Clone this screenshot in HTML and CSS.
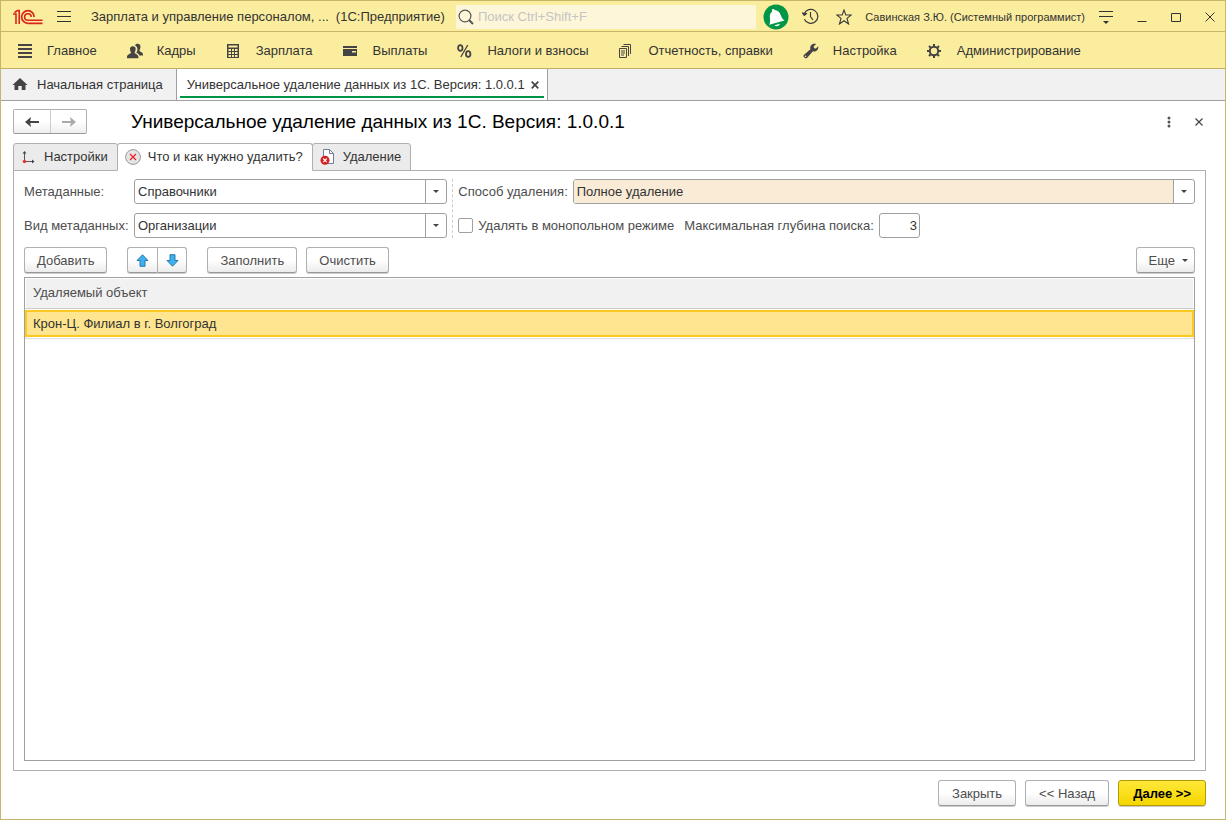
FILE: index.html
```html
<!DOCTYPE html>
<html lang="ru">
<head>
    <meta charset="UTF-8">
    <meta name="viewport" content="width=device-width, initial-scale=1.0">
    <title>Универсальное удаление данных из 1С</title>
    <link rel="stylesheet" href="styles.css">
</head>
<body>

<div class="window">
    <header class="titlebar">
        <svg class="logo" width="30" height="16" viewBox="0 0 30 16" fill="none" stroke="#d9251d">
            <path d="M0 5H3V15M1.5 3.5L4.5 1.6H6.2V15" stroke-width="1.6"/>
            <path d="M21.2 8A6.3 6.3 0 1 0 14.9 14.3H29.5" stroke-width="1.7"/>
            <path d="M18.2 8A3.3 3.3 0 1 0 14.9 11.3H29.5" stroke-width="1.6"/>
        </svg>
        <button class="icon-btn menu-btn" aria-label="Меню">
            <svg width="14" height="12" viewBox="0 0 14 12" stroke="#333"><path d="M0 .5H14M0 5.5H14M0 10.5H14"/></svg>
        </button>
        <span class="app-name">Зарплата и управление персоналом, ...</span>
        <span class="app-platform">(1С:Предприятие)</span>
        <label class="search">
            <svg width="16" height="16" viewBox="0 0 16 16" fill="none" stroke="#555"><circle cx="7" cy="7" r="5.9" stroke-width="1.2"/><path d="M11 11L15 15" stroke-width="2"/></svg>
            <input type="text" placeholder="Поиск Ctrl+Shift+F" aria-label="Поиск">
        </label>
        <div class="title-tools">
            <button class="icon-btn" aria-label="Уведомления">
                <svg width="26" height="26" viewBox="0 0 26 26">
                    <circle cx="13" cy="13" r="12.5" fill="#009646"/>
                    <path d="M9 5.6C10 4.6 11.2 5 11.6 6C14.6 6.2 16.6 8 17.8 11.2C18.8 14 19.6 15.2 21.6 16.4L6.2 20.8C7.2 19 7.2 17.6 7 15C6.6 11.6 6.8 9.2 9.2 7.4C8.8 6.8 8.7 6.2 9 5.6Z" fill="#fff"/>
                    <path d="M11.5 21.3L16.8 19.8C16.8 22.2 12.8 23.2 11.5 21.3Z" fill="#fff"/>
                </svg>
            </button>
            <button class="icon-btn" aria-label="История">
                <svg width="17" height="17" viewBox="0 0 17 17" fill="none" stroke="#3c3c3c" stroke-width="1.2">
                    <path d="M2.2 6A7 7 0 1 1 2.4 11.2"/><path d="M8.5 4V8.5L11 12"/><path d="M.3 4.5L2.2 7.3L5 5.3" fill="#3c3c3c"/>
                </svg>
            </button>
            <button class="icon-btn star-btn" aria-label="Избранное">
                <svg width="16" height="16" viewBox="0 0 16 16" fill="none" stroke="#3c3c3c" stroke-width="1.1">
                    <path d="M8 1L9.8 6H15.2L11 9.4L12.6 15L8 11.7L3.4 15L5 9.4L.8 6H6.2Z"/>
                </svg>
            </button>
            <span class="user">Савинская З.Ю. (Системный программист)</span>
        </div>
        <div class="window-tools">
            <button class="icon-btn" aria-label="Настройка панели">
                <svg width="14" height="14" viewBox="0 0 14 14"><path d="M0 1.5H14M0 6.5H14" stroke="#333"/><path d="M4 11H10L7 14Z" fill="#333"/></svg>
            </button>
            <button class="icon-btn" aria-label="Свернуть">
                <svg width="10" height="10" viewBox="0 0 10 10"><path d="M.5 9.5H9.5" stroke="#333"/></svg>
            </button>
            <button class="icon-btn" aria-label="Развернуть">
                <svg width="10" height="10" viewBox="0 0 10 10"><path d="M.5 1.5H9.5V9.5H.5Z" fill="none" stroke="#333"/></svg>
            </button>
            <button class="icon-btn" aria-label="Закрыть окно">
                <svg width="10" height="10" viewBox="0 0 10 10"><path d="M.5 .5L9.5 9.5M9.5 .5L.5 9.5" stroke="#333"/></svg>
            </button>
        </div>
    </header>

    <nav class="sections">
        <a href="#" class="section">
            <svg class="section-icon" viewBox="0 0 16 16" stroke="#444" stroke-width="2"><path d="M1 2H15M1 6H15M1 10H15M1 14H15"/></svg>
            Главное
        </a>
        <a href="#" class="section">
            <svg class="section-icon" viewBox="0 0 16 16" fill="#444">
                <path d="M10.5 .8C12.6 .8 13.8 2.2 13.4 4.4C13.2 6 12.6 6.8 12.4 7.6C12.5 9 16 9 16 11.5V12.5H12.3C12 11 10.8 10.4 9.3 9.8C10.8 8 11 5 9.3 3.2C8.8 2.8 8.3 2.6 8 2.5C8.4 1.4 9.3 .8 10.5 .8Z"/>
                <path d="M5.8 3.2C8 3.2 9 4.7 8.6 6.7C8.4 8 7.8 8.9 7.6 9.6C7.7 11 11.4 11.2 11.4 14V15.2H0V14C0 11.2 3.9 11 4 9.6C3.8 8.9 3.2 8 3 6.7C2.7 4.7 3.7 3.2 5.8 3.2Z"/>
            </svg>
            Кадры
        </a>
        <a href="#" class="section">
            <svg class="section-icon" viewBox="0 0 16 16"><path d="M1 1H13V15H1Z" fill="#444"/><path d="M2.5 2.5H11.5V4.5H2.5ZM2.5 6H5V8H2.5ZM6 6H8V8H6ZM9 6H11.5V8H9ZM2.5 9H5V11H2.5ZM6 9H8V11H6ZM9 9H11.5V11H9ZM2.5 12H5V14H2.5ZM6 12H8V14H6ZM9 12H11.5V14H9Z" fill="#fbed9e"/></svg>
            Зарплата
        </a>
        <a href="#" class="section">
            <svg class="section-icon" viewBox="0 0 16 16"><path d="M0 3H14V5H0ZM0 6H14V13H0Z" fill="#444"/><path d="M9 8H13V9.5H9Z" fill="#fbed9e"/></svg>
            Выплаты
        </a>
        <a href="#" class="section">
            <svg class="section-icon" viewBox="0 0 16 16" fill="none" stroke="#444" stroke-width="1.8"><ellipse cx="3.3" cy="5" rx="2.2" ry="2.9"/><ellipse cx="11.2" cy="11" rx="2.2" ry="2.9"/><path d="M10.8 2L3.8 14" stroke-width="1.3"/></svg>
            Налоги и взносы
        </a>
        <a href="#" class="section">
            <svg class="section-icon" viewBox="0 0 16 16" fill="none" stroke="#444"><path d="M.5 5.5H7.5V14.5H.5ZM2.5 3.5H9.5V13M4.5 1.5H11.5V11M2 8H6M2 10H6M2 12H5"/></svg>
            Отчетность, справки
        </a>
        <a href="#" class="section">
            <svg class="section-icon" viewBox="0 0 16 16"><path d="M9.3 1.2C10.8 .4 12.2 .6 13.1 1L10.6 3.6L11.2 5.2L12.9 5.5L15.2 3.2C15.6 5.2 14.8 7 13.2 7.9C12 8.6 10.8 8.6 9.9 8.3L4.2 14.7C2.6 16.2 -.4 14.2 .8 11.9L7.4 6.3C6.8 4 7.5 2.2 9.3 1.2Z" fill="#444"/><circle cx="2.6" cy="13.2" r=".8" fill="#fbed9e"/></svg>
            Настройка
        </a>
        <a href="#" class="section">
            <svg class="section-icon" viewBox="0 0 16 16" fill="none" stroke="#444"><circle cx="7" cy="8" r="4.2" stroke-width="2"/><path d="M7 1V3.5M7 12.5V15M0 8H2.5M11.5 8H14M2 3L3.9 4.9M10.1 11.1L12 13M12 3L10.1 4.9M3.9 11.1L2 13" stroke-width="2"/></svg>
            Администрирование
        </a>
    </nav>

    <div class="open-tabs">
        <a href="#" class="open-tab">
            <svg width="16" height="14" viewBox="0 0 16 14" fill="#444"><path d="M8 0L15.5 7H13.5V12H9.7V8H6.3V12H2.5V7H.5Z"/></svg>
            Начальная страница
        </a>
        <div class="open-tab current">
            <span>Универсальное удаление данных из 1С. Версия: 1.0.0.1</span>
            <button class="icon-btn" aria-label="Закрыть вкладку">
                <svg width="8" height="8" viewBox="0 0 8 8"><path d="M.7 .7L7.3 7.3M7.3 .7L.7 7.3" stroke="#444" stroke-width="1.7"/></svg>
            </button>
        </div>
    </div>

    <main class="page">
        <div class="page-header">
            <div class="history-btns">
                <button aria-label="Назад">
                    <svg width="14" height="10" viewBox="0 0 14 10"><path d="M14 5H3" stroke="#444" stroke-width="2"/><path d="M0 5L6 0L5 5L6 10Z" fill="#444"/></svg>
                </button>
                <button aria-label="Вперед">
                    <svg width="14" height="10" viewBox="0 0 14 10"><path d="M0 5H11" stroke="#aaa" stroke-width="2"/><path d="M14 5L8 0L9 5L8 10Z" fill="#aaa"/></svg>
                </button>
            </div>
            <h1>Универсальное удаление данных из 1С. Версия: 1.0.0.1</h1>
            <div class="page-tools">
                <button class="icon-btn" aria-label="Дополнительно">
                    <svg width="4" height="12" viewBox="0 0 4 12" fill="#555"><circle cx="2" cy="2" r="1.5"/><circle cx="2" cy="6" r="1.5"/><circle cx="2" cy="10" r="1.5"/></svg>
                </button>
                <button class="icon-btn" aria-label="Закрыть форму">
                    <svg width="8" height="8" viewBox="0 0 8 8"><path d="M.5 .5L7.5 7.5M7.5 .5L.5 7.5" stroke="#444" stroke-width="1.2"/></svg>
                </button>
            </div>
        </div>

        <div class="form-tabs">
            <button class="form-tab">
                <svg width="16" height="16" viewBox="0 0 16 16"><path d="M3.5 3V12.5H12" fill="none" stroke="#555"/><path d="M1.5 4.5L3.5 2L5.5 4.5ZM11 10.5L13.5 12.5L11 14.5Z" fill="#345"/><circle cx="3.5" cy="12.5" r="1.7" fill="#e8312a"/></svg>
                Настройки
            </button>
            <button class="form-tab active">
                <svg width="16" height="16" viewBox="0 0 16 16"><circle cx="8" cy="8" r="7.4" fill="#e4e4e4" stroke="#999"/><path d="M5 5L11 11M11 5L5 11" stroke="#e8202a" stroke-width="1.2"/></svg>
                Что и как нужно удалить?
            </button>
            <button class="form-tab">
                <svg width="16" height="16" viewBox="0 0 16 16"><path d="M3.5 .5H9.5L13.5 4.5V14.5H3.5Z" fill="#fff" stroke="#6b7f99"/><path d="M9.5 .5V4.5H13.5" fill="none" stroke="#6b7f99"/><circle cx="5" cy="11.3" r="4.5" fill="#d32020"/><path d="M3.2 9.5L6.8 13.1M6.8 9.5L3.2 13.1" stroke="#fff" stroke-width="1.2"/></svg>
                Удаление
            </button>
        </div>

        <section class="panel">
            <div class="fields">
                <div class="fields-left">
                    <label for="metadata">Метаданные:</label>
                    <div class="combo">
                        <select id="metadata"><option>Справочники</option></select>
                        <span class="combo-arrow"></span>
                    </div>
                    <label for="kind">Вид метаданных:</label>
                    <div class="combo">
                        <select id="kind"><option>Организации</option></select>
                        <span class="combo-arrow"></span>
                    </div>
                </div>
                <div class="fields-right">
                    <div class="field-row">
                        <label for="method">Способ удаления:</label>
                        <div class="combo highlighted">
                            <select id="method"><option>Полное удаление</option></select>
                            <span class="combo-arrow"></span>
                        </div>
                    </div>
                    <div class="field-row">
                        <input type="checkbox" id="exclusive" class="check">
                        <label for="exclusive" class="check-label">Удалять в монопольном режиме</label>
                        <label for="depth">Максимальная глубина поиска:</label>
                        <input type="text" id="depth" class="number" value="3">
                    </div>
                </div>
            </div>

            <div class="toolbar">
                <button class="btn">Добавить</button>
                <div class="move-btns">
                    <button class="btn" aria-label="Вверх">
                        <svg width="13" height="13" viewBox="0 0 13 13"><path d="M6.5 .8L12 6.5H9V12.3H4V6.5H1Z" fill="#3fb0f0" stroke="#2a78ac"/></svg>
                    </button>
                    <button class="btn" aria-label="Вниз">
                        <svg width="13" height="13" viewBox="0 0 13 13"><path d="M6.5 12.2L12 6.5H9V.7H4V6.5H1Z" fill="#3fb0f0" stroke="#2a78ac"/></svg>
                    </button>
                </div>
                <button class="btn">Заполнить</button>
                <button class="btn">Очистить</button>
                <button class="btn more">Еще <span class="arrow-down"></span></button>
            </div>

            <div class="table-box">
                <table>
                    <thead>
                        <tr><th>Удаляемый объект</th></tr>
                    </thead>
                    <tbody>
                        <tr class="selected"><td>Крон-Ц. Филиал в г. Волгоград</td></tr>
                    </tbody>
                </table>
            </div>
        </section>

        <footer class="commands">
            <button class="btn">Закрыть</button>
            <button class="btn">&lt;&lt; Назад</button>
            <button class="btn primary">Далее &gt;&gt;</button>
        </footer>
    </main>
</div>

</body>
</html>
```
FILE: styles.css
```css
* {
    box-sizing: border-box;
}

body {
    margin: 0;
    font-family: "Liberation Sans", Arial, sans-serif;
    font-size: 13px;
    line-height: 16px;
    color: #333;
    background: #fff;
}

button, input, select {
    font: inherit;
    color: inherit;
    margin: 0;
}

svg {
    display: block;
    flex: none;
}

a {
    color: inherit;
    text-decoration: none;
}

.window {
    display: flex;
    flex-direction: column;
    min-height: 100vh;
    border: 1px solid #c8b668;
    white-space: nowrap;
}

.icon-btn {
    display: flex;
    padding: 0;
    border: none;
    background: none;
    cursor: pointer;
}

/* Title bar */
.titlebar {
    display: flex;
    align-items: center;
    height: 31px;
    padding: 1px 10px 0 12px;
    background: #fbed9e;
    border-bottom: 1px solid #c8b668;
}

.menu-btn {
    margin: 0 20px 0 14px;
}

.app-platform {
    margin: 0 11px 0 7px;
}

.search {
    display: flex;
    flex: 1;
    align-items: center;
    gap: 4px;
    height: 24px;
    padding-left: 2px;
    background: #fef6d8;
    border-radius: 2px;
}

.search input {
    flex: 1;
    min-width: 0;
    padding: 0;
    border: none;
    outline: none;
    background: none;
}

.search input::placeholder {
    color: #c4c4c4;
    opacity: 1;
}

.title-tools {
    display: flex;
    align-items: center;
    gap: 13px;
    margin-left: 7px;
    font-size: 11px;
}

.star-btn {
    margin-left: 4px;
}

.window-tools {
    display: flex;
    align-items: center;
    gap: 24px;
    margin-left: 14px;
}

/* Sections */
.sections {
    display: flex;
    align-items: center;
    gap: 30px;
    height: 37px;
    padding: 1px 0 0 16px;
    background: #fbed9e;
    border-bottom: 1px solid #c0ae62;
}

.section {
    display: flex;
    align-items: center;
    gap: 14px;
}

.section-icon {
    width: 16px;
    height: 16px;
}

/* Open forms */
.open-tabs {
    display: flex;
    height: 32px;
    background: #f1f1f1;
    border-bottom: 1px solid #a0a0a0;
}

.open-tab {
    display: flex;
    align-items: center;
    gap: 9px;
    padding: 0 13px 0 11px;
    border-right: 1px solid #a0a0a0;
}

.open-tab.current {
    gap: 6px;
    padding: 0 8px 0 10px;
    background: linear-gradient(#009646, #009646) center bottom 2px / calc(100% - 6px) 2px no-repeat #fff;
}

/* Form */
.page {
    display: flex;
    flex: 1;
    flex-direction: column;
    padding: 8px 19px 13px 12px;
}

.page-header {
    display: flex;
    align-items: center;
    margin-bottom: 9px;
}

.page-header h1 {
    flex: 1;
    margin: 0 0 0 44px;
    font-size: 19px;
    font-weight: normal;
    line-height: 24px;
    color: #000;
}

.history-btns {
    display: flex;
    height: 25px;
    border: 1px solid #b0b0b0;
    border-bottom-color: #999;
    border-radius: 2px;
    background: linear-gradient(#fff 50%, #eee);
}

.history-btns button {
    display: flex;
    align-items: center;
    justify-content: center;
    width: 35px;
    padding: 0;
    border: none;
    background: none;
}

.history-btns button:first-child {
    width: 37px;
    border-right: 1px solid #ccc;
}

.page-tools {
    display: flex;
    align-items: center;
    gap: 24px;
    padding-right: 3px;
}

.form-tabs {
    display: flex;
    margin-bottom: -1px;
}

.form-tab {
    display: flex;
    align-items: center;
    gap: 7px;
    height: 28px;
    padding: 0 9px 0 7px;
    border: 1px solid #b0b0b0;
    border-radius: 3px 3px 0 0;
    background: #ebebeb;
}

.form-tab + .form-tab {
    margin-left: -1px;
}

.form-tab.active {
    border-bottom-color: #fff;
    background: #fff;
    z-index: 1;
}

.panel {
    display: flex;
    flex: 1;
    flex-direction: column;
    padding: 8px 10px 9px;
    border: 1px solid #b0b0b0;
}

.fields {
    display: grid;
    grid-template-columns: 11fr 19fr;
    color: #4d4d4d;
}

.fields-left {
    display: grid;
    grid-template-columns: 105px 1fr;
    gap: 9px 5px;
    align-items: center;
    padding-right: 5px;
    border-right: 1px dashed #ccc;
}

.fields-right {
    display: flex;
    flex-direction: column;
    gap: 9px;
    padding-left: 5px;
}

.field-row {
    display: flex;
    align-items: center;
    gap: 5px;
}

.combo {
    display: flex;
    flex: 1;
    height: 25px;
    border: 1px solid #a0a0a0;
    border-radius: 3px;
    overflow: hidden;
    color: #333;
    background: #fff;
}

.combo select {
    flex: 1;
    min-width: 0;
    padding: 0 3px;
    border: none;
    outline: none;
    appearance: none;
    background: none;
}

.combo.highlighted select {
    background: #faebd7;
}

.combo-arrow {
    display: flex;
    align-items: center;
    justify-content: center;
    width: 21px;
    border-left: 1px solid #a0a0a0;
}

.combo-arrow::before, .arrow-down {
    content: "";
    border: 3px solid transparent;
    border-top-color: #444;
    border-bottom: none;
}

.check {
    width: 15px;
    height: 15px;
    border: 1px solid #a0a0a0;
    border-radius: 2px;
    appearance: none;
    background: #fff;
}

.check:checked {
    background: #555;
}

.check-label {
    margin-right: 5px;
}

.number {
    width: 41px;
    height: 25px;
    padding: 0 2px;
    border: 1px solid #a0a0a0;
    border-radius: 3px;
    text-align: right;
    color: #333;
}

.btn {
    display: flex;
    align-items: center;
    justify-content: center;
    height: 26px;
    padding: 1px 13px 0;
    border: 1px solid #b0b0b0;
    border-bottom-color: #999;
    border-radius: 3px;
    background: linear-gradient(#fff 50%, #ececec);
    box-shadow: 0 1px 0 #ccc;
    color: #4d4d4d;
    cursor: pointer;
}

.toolbar {
    display: flex;
    gap: 9px;
    margin: 9px 0 4px;
}

.toolbar .btn {
    padding: 1px 12px 0;
}

.move-btns {
    display: flex;
    margin: 0 11px;
}

.toolbar .move-btns .btn {
    width: 30px;
    padding: 0;
}

.move-btns .btn:first-child {
    border-right: none;
    border-radius: 3px 0 0 3px;
}

.move-btns .btn:last-child {
    border-radius: 0 3px 3px 0;
}

.toolbar .more {
    gap: 7px;
    margin-left: auto;
    padding-right: 6px;
}

.table-box {
    flex: 1;
    border: 1px solid #a0a0a0;
}

table {
    width: 100%;
    border-collapse: separate;
    border-spacing: 0 1px;
}

th {
    height: 30px;
    padding: 0 7px 2px;
    border: 1px solid #fff;
    border-top: none;
    border-bottom-color: #ccc;
    font-weight: normal;
    text-align: left;
    color: #4d4d4d;
    background: #f1f1f1;
    background-clip: padding-box;
}

td {
    height: 27px;
    padding: 0 6px;
}

.selected td {
    border: 2px solid #fcc920;
    background: #ffe58f;
    box-shadow: 0 2px 0 -1px #fff, 0 2px 0 #e0e0e0;
}

.commands {
    display: flex;
    justify-content: flex-end;
    gap: 9px;
    margin-top: 9px;
}

.btn.primary {
    padding: 1px 14px 0;
    border-color: #b39b00;
    font-weight: bold;
    color: #000;
    background: linear-gradient(#ffe838, #f5d600);
}
```
